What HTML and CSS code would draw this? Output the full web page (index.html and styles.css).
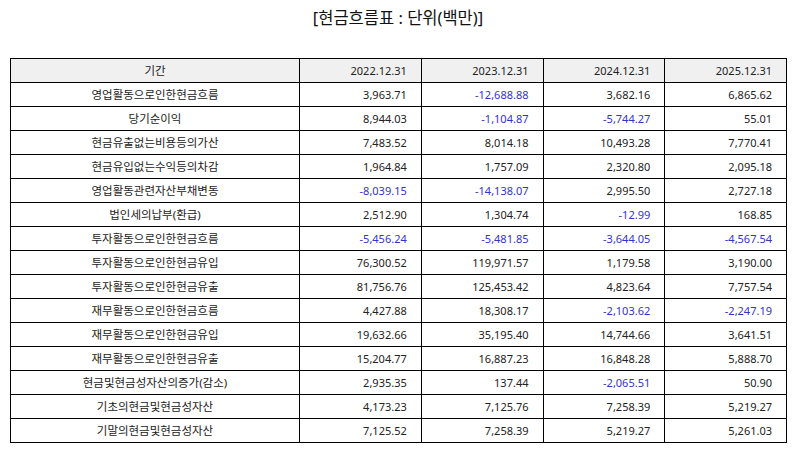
FILE: index.html
```html
<!DOCTYPE html>
<html lang="ko">
<head>
<meta charset="utf-8">
<link rel="stylesheet" href="styles.css">
</head>
<body>
<div class="page">
  <h1 class="title">[현금흐름표 : 단위(백만)]</h1>
  <table class="cf">
    <colgroup>
      <col class="c-label"><col class="c-num"><col class="c-num"><col class="c-num"><col class="c-num">
    </colgroup>
    <thead>
      <tr><th class="label">기간</th><th>2022.12.31</th><th>2023.12.31</th><th>2024.12.31</th><th>2025.12.31</th></tr>
    </thead>
    <tbody>
      <tr><td class="label">영업활동으로인한현금흐름</td><td>3,963.71</td><td class="neg">-12,688.88</td><td>3,682.16</td><td>6,865.62</td></tr>
      <tr><td class="label">당기순이익</td><td>8,944.03</td><td class="neg">-1,104.87</td><td class="neg">-5,744.27</td><td>55.01</td></tr>
      <tr><td class="label">현금유출없는비용등의가산</td><td>7,483.52</td><td>8,014.18</td><td>10,493.28</td><td>7,770.41</td></tr>
      <tr><td class="label">현금유입없는수익등의차감</td><td>1,964.84</td><td>1,757.09</td><td>2,320.80</td><td>2,095.18</td></tr>
      <tr><td class="label">영업활동관련자산부채변동</td><td class="neg">-8,039.15</td><td class="neg">-14,138.07</td><td>2,995.50</td><td>2,727.18</td></tr>
      <tr><td class="label">법인세의납부(환급)</td><td>2,512.90</td><td>1,304.74</td><td class="neg">-12.99</td><td>168.85</td></tr>
      <tr><td class="label">투자활동으로인한현금흐름</td><td class="neg">-5,456.24</td><td class="neg">-5,481.85</td><td class="neg">-3,644.05</td><td class="neg">-4,567.54</td></tr>
      <tr><td class="label">투자활동으로인한현금유입</td><td>76,300.52</td><td>119,971.57</td><td>1,179.58</td><td>3,190.00</td></tr>
      <tr><td class="label">투자활동으로인한현금유출</td><td>81,756.76</td><td>125,453.42</td><td>4,823.64</td><td>7,757.54</td></tr>
      <tr><td class="label">재무활동으로인한현금흐름</td><td>4,427.88</td><td>18,308.17</td><td class="neg">-2,103.62</td><td class="neg">-2,247.19</td></tr>
      <tr><td class="label">재무활동으로인한현금유입</td><td>19,632.66</td><td>35,195.40</td><td>14,744.66</td><td>3,641.51</td></tr>
      <tr><td class="label">재무활동으로인한현금유출</td><td>15,204.77</td><td>16,887.23</td><td>16,848.28</td><td>5,888.70</td></tr>
      <tr><td class="label">현금및현금성자산의증가(감소)</td><td>2,935.35</td><td>137.44</td><td class="neg">-2,065.51</td><td>50.90</td></tr>
      <tr><td class="label">기초의현금및현금성자산</td><td>4,173.23</td><td>7,125.76</td><td>7,258.39</td><td>5,219.27</td></tr>
      <tr><td class="label">기말의현금및현금성자산</td><td>7,125.52</td><td>7,258.39</td><td>5,219.27</td><td>5,261.03</td></tr>
    </tbody>
  </table>
</div>
</body>
</html>
```

FILE: styles.css
```css
html, body {
  margin: 0;
  padding: 0;
  background: #ffffff;
}
body {
  font-family: "Noto Sans", "Noto Sans CJK KR", sans-serif;
  color: #222222;
}
.page {
  padding: 6px 8px 0 10px;
}
.title {
  margin: 0;
  height: 52px;
  line-height: 24px;
  font-size: 16.5px;
  font-weight: normal;
  text-align: center;
  color: #111111;
}
.cf {
  width: 776px;
  border-collapse: collapse;
  table-layout: fixed;
  font-size: 11px;
}
.c-label { width: 289px; }
.c-num { width: 121.75px; }
.cf th, .cf td {
  border: 1px solid #000000;
  height: 23px;
  padding: 0 14px 0 4px;
  text-align: right;
  font-weight: normal;
  line-height: 14px;
  white-space: nowrap;
}
.cf th {
  background: #f0f0f0;
}
.cf .label {
  text-align: center;
  padding: 0 4px;
  font-size: 11.5px;
}
.cf .neg {
  color: #3333cc;
}
```
